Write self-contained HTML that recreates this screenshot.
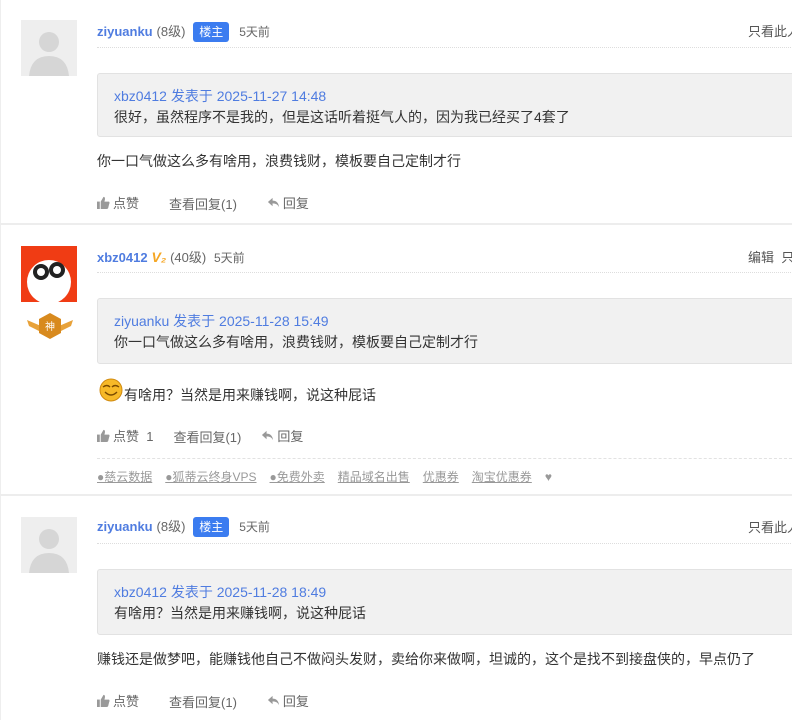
<!DOCTYPE html>
<html><head><meta charset="utf-8"><style>
*{margin:0;padding:0;box-sizing:border-box}
body{width:792px;height:720px;overflow:hidden;background:#fff;font-family:"Liberation Sans","Noto Sans CJK SC",sans-serif;font-size:14px;color:#333;position:relative}
.a{position:absolute;white-space:nowrap}
.sep{position:absolute;left:0;width:792px;height:2px;background:#ededed}
.av{position:absolute;left:21px;width:56px;height:56px;background:#eee;overflow:hidden}
.name{color:#4f7ce0;font-weight:bold;font-size:13px}
.lv{color:#666;font-size:13px}
.tag{display:inline-block;background:#3b7cf0;color:#fff;border-radius:3px;padding:0 6px;height:20px;line-height:20px;font-size:12px;margin:0 6px 0 4px}
.time{color:#666;font-size:12px}
.dot{position:absolute;left:97px;width:700px;border-top:1px dotted #ddd}
.q{position:absolute;left:97px;width:700px;background:#f1f1f1;border:1px solid #e2e2e2;border-radius:3px;padding:12px 16px}
.q .h{color:#4f7ce0;line-height:20px}
.q .t{line-height:22px}
.act{color:#666;font-size:13px}
.act span{margin-right:30px;display:inline-flex;align-items:center;gap:3px}
.lk{color:#999;font-size:12px;text-decoration:underline;margin-right:13px}
</style></head><body>
<div style="position:absolute;left:0;top:0;width:1px;height:720px;background:#eee"></div>
<svg width="0" height="0" style="position:absolute"><defs>
<symbol id="th" viewBox="0 0 14 14"><rect x="0" y="6" width="3" height="8" fill="#999"/><path d="M4 6 L7 1 Q9 1 8.5 4 L8 6 H13 Q14 7 13 9 L12 13 Q11.5 14 10 14 H4Z" fill="#999"/></symbol>
<symbol id="rp" viewBox="0 0 14 14"><path d="M6 2 L1 6.5 L6 11 V8 Q11 8 13 12 Q12 5 6 5Z" fill="#999"/></symbol>
</defs></svg>

<!-- post1 -->
<div class="av" style="top:20px"><svg width="56" height="56"><circle cx="28" cy="22" r="10" fill="#d6d6d6"/><path d="M8 56 Q10 36 28 36 Q46 36 48 56Z" fill="#d6d6d6"/></svg></div>
<div class="a" style="left:97px;top:21px;line-height:20px"><span class="name">ziyuanku</span> <span class="lv">(8级)</span> <span class="tag">楼主</span> <span class="time">5天前</span></div>
<div class="a" style="left:748px;top:21px;color:#555;font-size:13px">只看此人</div>
<div class="dot" style="top:47px"></div>
<div class="q" style="top:73px;height:64px"><div class="h">xbz0412 发表于 2025-11-27 14:48</div><div class="t">很好，虽然程序不是我的，但是这话听着挺气人的，因为我已经买了4套了</div></div>
<div class="a" style="left:97px;top:151px">你一口气做这么多有啥用，浪费钱财，模板要自己定制才行</div>
<div class="a act" style="left:97px;top:193px"><span><svg width="13" height="13"><use href="#th"/></svg>点赞</span><span>查看回复(1)</span><span><svg width="13" height="13"><use href="#rp"/></svg>回复</span></div>
<div class="sep" style="top:223px"></div>

<!-- post2 -->
<div class="av" style="top:246px;background:#f03c14"><svg width="56" height="56"><ellipse cx="28" cy="36" rx="22" ry="22" fill="#fff"/><circle cx="20" cy="26" r="8" fill="#222"/><circle cx="36" cy="24" r="8" fill="#222"/><circle cx="20" cy="26" r="4" fill="#fff"/><circle cx="36" cy="24" r="4" fill="#fff"/></svg></div>
<div class="a" style="left:27px;top:312px"><svg width="46" height="28"><path d="M0 8 L14 14 L14 20 L2 14Z M46 8 L32 14 L32 20 L44 14Z" fill="#e8a23a"/><polygon points="23,1 34,7 34,21 23,27 12,21 12,7" fill="#d88a1e"/><text x="23" y="18" font-size="10" fill="#fff" text-anchor="middle" font-family="Noto Sans CJK SC">神</text></svg></div>
<div class="a" style="left:97px;top:247px;line-height:20px"><span class="name">xbz0412</span> <span style="color:#f5a623;font-weight:bold;font-style:italic">V₂</span> <span class="lv">(40级)</span> &nbsp;<span class="time">5天前</span></div>
<div class="a" style="left:748px;top:247px;color:#555;font-size:13px">编辑 &nbsp;只</div>
<div class="dot" style="top:272px"></div>
<div class="q" style="top:298px;height:66px"><div class="h">ziyuanku 发表于 2025-11-28 15:49</div><div class="t">你一口气做这么多有啥用，浪费钱财，模板要自己定制才行</div></div>
<div class="a" style="left:99px;top:378px"><svg width="24" height="24"><circle cx="12" cy="12" r="11" fill="#f7b928" stroke="#d08a10"/><path d="M4 9 Q8 6 11 9 M13 9 Q16 6 20 9" stroke="#7a4a00" fill="none" stroke-width="1.4"/><path d="M6 14 Q12 20 18 14" stroke="#7a4a00" fill="none" stroke-width="1.4"/></svg></div>
<div class="a" style="left:124px;top:385px">有啥用？当然是用来赚钱啊，说这种屁话</div>
<div class="a act" style="left:97px;top:426px"><span style="margin-right:20px"><svg width="13" height="13"><use href="#th"/></svg>点赞 &nbsp;1</span><span style="margin-right:20px">查看回复(1)</span><span><svg width="13" height="13"><use href="#rp"/></svg>回复</span></div>
<div class="dot" style="top:458px;border-top:1px dashed #e2e2e2"></div>
<div class="a" style="left:97px;top:468px"><span class="lk">●慈云数据</span><span class="lk">●狐蒂云终身VPS</span><span class="lk">●免费外卖</span><span class="lk">精品域名出售</span><span class="lk">优惠券</span><span class="lk">淘宝优惠券</span><span style="color:#999;font-size:12px">♥</span></div>
<div class="sep" style="top:494px"></div>

<!-- post3 -->
<div class="av" style="top:517px"><svg width="56" height="56"><circle cx="28" cy="22" r="10" fill="#d6d6d6"/><path d="M8 56 Q10 36 28 36 Q46 36 48 56Z" fill="#d6d6d6"/></svg></div>
<div class="a" style="left:97px;top:516px;line-height:20px"><span class="name">ziyuanku</span> <span class="lv">(8级)</span> <span class="tag">楼主</span> <span class="time">5天前</span></div>
<div class="a" style="left:748px;top:517px;color:#555;font-size:13px">只看此人</div>
<div class="dot" style="top:543px"></div>
<div class="q" style="top:569px;height:66px"><div class="h">xbz0412 发表于 2025-11-28 18:49</div><div class="t">有啥用？当然是用来赚钱啊，说这种屁话</div></div>
<div class="a" style="left:97px;top:649px">赚钱还是做梦吧，能赚钱他自己不做闷头发财，卖给你来做啊，坦诚的，这个是找不到接盘侠的，早点仍了</div>
<div class="a act" style="left:97px;top:691px"><span><svg width="13" height="13"><use href="#th"/></svg>点赞</span><span>查看回复(1)</span><span><svg width="13" height="13"><use href="#rp"/></svg>回复</span></div>
</body></html>
